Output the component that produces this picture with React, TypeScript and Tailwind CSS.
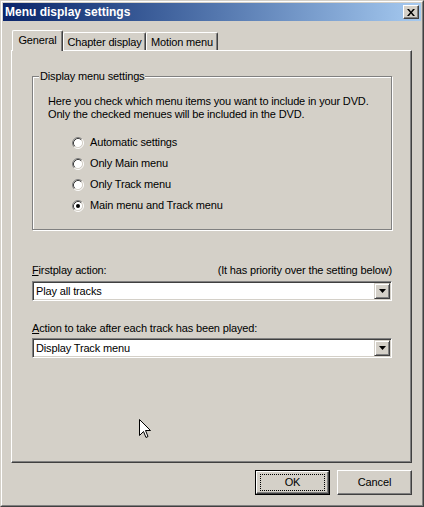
import { ReactNode } from 'react';

const font = "font-['Liberation_Sans',Arial,sans-serif] text-[11px] tracking-[-0.15px] text-black";

function Radio({ checked, label }: { checked?: boolean; label: string }) {
    return (
        <div className="flex items-center h-[21px] gap-[6px]">
            <svg width="12" height="12" viewBox="0 0 12 12" className="shrink-0">
                <circle cx="6" cy="6" r="4.5" fill="#fff" />
                <path d="M2.11 9.89 A5.5 5.5 0 0 1 9.89 2.11" fill="none" stroke="#808080" />
                <path d="M9.89 2.11 A5.5 5.5 0 0 1 2.11 9.89" fill="none" stroke="#fff" />
                <path d="M2.82 9.18 A4.5 4.5 0 0 1 9.18 2.82" fill="none" stroke="#404040" />
                <path d="M9.18 2.82 A4.5 4.5 0 0 1 2.82 9.18" fill="none" stroke="#d4d0c8" />
                {checked && <circle cx="6" cy="6" r="2" fill="#000" />}
            </svg>
            <span className="leading-[13px]">{label}</span>
        </div>
    );
}

function Combo({ value }: { value: string }) {
    return (
        <div className="h-[20px] flex bg-white border border-t-[#808080] border-l-[#808080] border-r-white border-b-white shadow-[inset_1px_1px_0_#404040,inset_-1px_-1px_0_#d4d0c8] p-[1px]">
            <div className="flex-1 flex items-center pl-[2px] leading-[13px]">{value}</div>
            <div className="w-[16px] h-[16px] bg-[#d4d0c8] border border-t-[#d4d0c8] border-l-[#d4d0c8] border-r-[#404040] border-b-[#404040] shadow-[inset_1px_1px_0_#fff,inset_-1px_-1px_0_#808080] flex items-center justify-center">
                <svg width="7" height="4" viewBox="0 0 7 4">
                    <polygon points="0,0 7,0 3.5,4" fill="#000" />
                </svg>
            </div>
        </div>
    );
}

function Tab({ children, selected, w }: { children: ReactNode; selected?: boolean; w: string }) {
    return selected ? (
        <div className={`${w} h-[21px] -mb-px relative z-10 bg-[#d4d0c8] border-t border-l border-r border-t-white border-l-white border-r-[#404040] shadow-[inset_-1px_0_0_#808080] rounded-t-[2px] flex items-center justify-center pb-[1px]`}>
            {children}
        </div>
    ) : (
        <div className={`${w} h-[18px] bg-[#d4d0c8] border-t border-l border-r border-t-white border-l-white border-r-[#404040] shadow-[inset_-1px_0_0_#808080] rounded-t-[2px] flex items-center justify-center pt-[1px]`}>
            {children}
        </div>
    );
}

function Button({ children, isDefault }: { children: ReactNode; isDefault?: boolean }) {
    return (
        <div className={`w-[75px] h-[25px] ${isDefault ? 'border border-black' : ''}`}>
            <div className="relative w-full h-full bg-[#d4d0c8] border border-t-white border-l-white border-r-[#404040] border-b-[#404040] shadow-[inset_-1px_-1px_0_#808080] flex items-center justify-center">
                {isDefault && <div className="absolute left-[3px] right-[3px] top-[2px] bottom-[2px] border border-dotted border-black" />}
                <span className="leading-[13px]">{children}</span>
            </div>
        </div>
    );
}

export default function App() {
    return (
        <div className={`relative w-[424px] h-[507px] bg-[#d4d0c8] border border-t-[#d4d0c8] border-l-[#d4d0c8] border-r-[#404040] border-b-[#404040] ${font}`}>
            <div className="w-full h-full border border-t-white border-l-white border-r-[#808080] border-b-[#808080] p-px flex flex-col">
                {/* title bar */}
                <div className="h-[18px] shrink-0 flex items-center justify-between bg-linear-to-r from-[#0a246a] to-[#a6caf0] pl-[2px] pr-[2px]">
                    <span className="text-white font-bold text-[12px] tracking-normal leading-[14px]">Menu display settings</span>
                    <div className="w-[16px] h-[14px] bg-[#d4d0c8] border border-t-white border-l-white border-r-[#404040] border-b-[#404040] shadow-[inset_-1px_-1px_0_#808080] flex items-center justify-center">
                        <svg width="8" height="7" viewBox="0 0 8 7">
                            <path d="M0 0h2l2 2.5L6 0h2L5 3.5 8 7H6L4 4.5 2 7H0l3-3.5z" fill="#000" />
                        </svg>
                    </div>
                </div>

                <div className="pl-[8px] pr-[9px] flex flex-col flex-1">
                    {/* tabs */}
                    <div className="mt-[9px] h-[20px] flex items-end pl-[1px]">
                        <Tab selected w="w-[51px]">General</Tab>
                        <Tab w="w-[83px]">Chapter display</Tab>
                        <Tab w="w-[72px]">Motion menu</Tab>
                    </div>

                    {/* panel */}
                    <div className="h-[413px] border border-t-white border-l-white border-r-[#404040] border-b-[#404040] shadow-[inset_-1px_-1px_0_#808080] pl-[20px] pr-[19px] pt-[25px]">
                        <div className="relative h-[154px] border border-[#808080] shadow-[1px_1px_0_#fff,inset_1px_1px_0_#fff] pl-[15px] pt-[18px]">
                            <div className="absolute left-[6px] top-[-7px] h-[13px] leading-[13px] px-[1px] bg-[#d4d0c8]">Display menu settings</div>
                            <div className="leading-[13px]">
                                <div>Here you check which menu items you want to include in your DVD.</div>
                                <div>Only the checked menues will be included in the DVD.</div>
                            </div>
                            <div className="mt-[11px] ml-[24px] flex flex-col">
                                <Radio label="Automatic settings" />
                                <Radio label="Only Main menu" />
                                <Radio label="Only Track menu" />
                                <Radio checked label="Main menu and Track menu" />
                            </div>
                        </div>

                        <div className="mt-[34px] flex justify-between leading-[13px]">
                            <span><u>F</u>irstplay action:</span>
                            <span>(It has priority over the setting below)</span>
                        </div>
                        <div className="mt-[4px]">
                            <Combo value="Play all tracks" />
                        </div>

                        <div className="mt-[21px] leading-[13px]">
                            <span><u>A</u>ction to take after each track has been played:</span>
                        </div>
                        <div className="mt-[3px]">
                            <Combo value="Display Track menu" />
                        </div>
                    </div>

                    {/* buttons */}
                    <div className="mt-[7px] flex justify-end gap-[7px]">
                        <Button isDefault>OK</Button>
                        <Button>Cancel</Button>
                    </div>
                </div>
            </div>

            {/* mouse pointer */}
            <svg className="absolute left-[138px] top-[418px]" width="13" height="20" viewBox="0 0 13 20">
                <path d="M0.5 0.5V16.5L4.5 12.5L7 18.5L9 17.5L6.5 11.5H11.5Z" fill="#fff" stroke="#000" strokeLinejoin="miter" />
            </svg>
        </div>
    );
}
